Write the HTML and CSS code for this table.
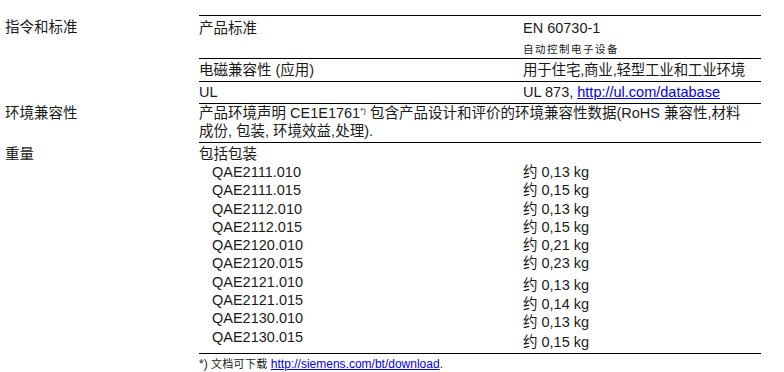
FILE: index.html
```html
<!DOCTYPE html>
<html lang="zh-CN">
<head>
<meta charset="utf-8">
<link rel="stylesheet" href="styles.css">
</head>
<body>
<div class="page">
  <div class="sec">
    <div class="label l1">指令和标准</div>
    <div class="content">
      <div class="row r1">
        <div class="c1">产品标准</div>
        <div class="c2">
          <div>EN 60730-1</div>
          <div class="small">自动控制电子设备</div>
        </div>
      </div>
      <div class="row r2">
        <div class="c1">电磁兼容性 (应用)</div>
        <div class="c2 narrow">用于住宅,商业,轻型工业和工业环境</div>
      </div>
      <div class="row r3">
        <div class="c1">UL</div>
        <div class="c2">UL 873, <a class="link" href="#">http://ul.com/database</a></div>
      </div>
    </div>
  </div>
  <div class="sec">
    <div class="label l4">环境兼容性</div>
    <div class="content">
      <div class="row r4">
        <div class="para">产品环境声明 CE1E1761<sup class="sup">*)</sup> 包含产品设计和评价的环境兼容性数据(RoHS 兼容性,材料<br>成份, 包装, 环境效益,处理).</div>
      </div>
    </div>
  </div>
  <div class="sec">
    <div class="label l5">重量</div>
    <div class="content">
      <div class="row r5">
        <div class="pack">包括包装</div>
        <div class="weights">
          <div class="codes">
            <div>QAE2111.010</div>
            <div>QAE2111.015</div>
            <div>QAE2112.010</div>
            <div>QAE2112.015</div>
            <div>QAE2120.010</div>
            <div>QAE2120.015</div>
            <div>QAE2121.010</div>
            <div>QAE2121.015</div>
            <div>QAE2130.010</div>
            <div>QAE2130.015</div>
          </div>
          <div class="values">
            <div>约 0,13 kg</div>
            <div>约 0,15 kg</div>
            <div>约 0,13 kg</div>
            <div>约 0,15 kg</div>
            <div>约 0,21 kg</div>
            <div>约 0,23 kg</div>
            <div class="v7">约 0,13 kg</div>
            <div class="v8">约 0,14 kg</div>
            <div>约 0,13 kg</div>
            <div class="v10">约 0,15 kg</div>
          </div>
        </div>
      </div>
      <div class="footer"><span class="star">*)</span> <span class="fcn">文档可下载</span> <a class="link" href="#">http://siemens.com/bt/download</a>.</div>
    </div>
  </div>
</div>
</body>
</html>
```

FILE: styles.css
```css
html, body {
  margin: 0;
  padding: 0;
  background: #ffffff;
}
body {
  font-family: "Liberation Sans", Arial, "Noto Sans CJK SC", sans-serif;
  font-size: 14.5px;
  color: #1a1a1a;
}
.page {
  padding-top: 15px;
  width: 761px;
}
.sec {
  display: grid;
  grid-template-columns: 194px 562px;
  padding-left: 5px;
}
.label {
  line-height: 18px;
}
.l1 { padding-top: 3px; }
.l4 { padding-top: 1px; }
.l5 { padding-top: 3px; }
.row {
  border-top: 1px solid #000;
}
.r1, .r2, .r3 {
  display: grid;
  grid-template-columns: 324px 238px;
}
.r1 {
  padding-top: 3px;
  padding-bottom: 2px;
  line-height: 18px;
  height: 37px;
}
.small {
  font-size: 10.5px;
  letter-spacing: 1.5px;
  line-height: 14px;
  margin-top: 5px;
}
.r2 {
  line-height: 22px;
  height: 22px;
}
.narrow {
  letter-spacing: -0.2px;
}
.r3 {
  line-height: 21px;
  height: 21px;
}
.link {
  color: #0000ee;
  text-decoration: underline;
}
.r4 {
  line-height: 18px;
  padding-top: 0;
  padding-bottom: 2px;
}
.sup {
  font-size: 8px;
  line-height: 0;
  vertical-align: 5px;
}
.r5 {
  padding-top: 2px;
}
.pack {
  line-height: 18px;
}
.weights {
  display: grid;
  grid-template-columns: 324px 238px;
  line-height: 18.3px;
}
.codes {
  padding-left: 13px;
}
.v7 { margin-top: 3px; }
.v8 { margin-top: 1px; }
.v10 { margin-top: 1px; }
.footer {
  margin-top: 2px;
  border-top: 1px solid #000;
  font-size: 12px;
  line-height: 18px;
  padding-top: 1px;
}
.fcn {
  font-size: 11px;
  letter-spacing: 0.3px;
}
```
